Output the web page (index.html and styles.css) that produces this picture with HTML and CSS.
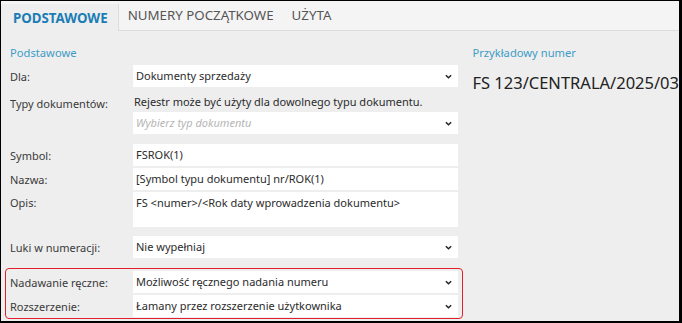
FILE: index.html
```html
<!DOCTYPE html>
<html lang="pl">
<head>
  <meta charset="UTF-8" />
  <meta name="viewport" content="width=device-width,initial-scale=1" />
  <title>Rejestr numeracji</title>
  <link rel="stylesheet" href="styles.css">
</head>
<body>
  <div class="frame">
    <div class="tabs">
      <div class="tab active">PODSTAWOWE</div>
      <div class="tab">NUMERY POCZĄTKOWE</div>
      <div class="tab">UŻYTA</div>
    </div>

    <div class="content">
      <div class="left">
        <div class="section-title">Podstawowe</div>

        <div class="row">
          <div class="label">Dla:</div>
          <div class="field select">Dokumenty sprzedaży
            <svg class="chev" viewBox="0 0 8 5"><path d="M1 1l3 3 3-3"/></svg>
          </div>
        </div>

        <div class="row row-top types">
          <div class="label">Typy dokumentów:</div>
          <div class="stack">
            <div class="note">Rejestr może być użyty dla dowolnego typu dokumentu.</div>
            <div class="field select placeholder">Wybierz typ dokumentu
              <svg class="chev" viewBox="0 0 8 5"><path d="M1 1l3 3 3-3"/></svg>
            </div>
          </div>
        </div>

        <div class="group">
          <div class="row">
            <div class="label">Symbol:</div>
            <div class="field">FSROK(1)</div>
          </div>
          <div class="row">
            <div class="label">Nazwa:</div>
            <div class="field">[Symbol typu dokumentu] nr/ROK(1)</div>
          </div>
          <div class="row row-top">
            <div class="label">Opis:</div>
            <div class="field tall">FS &lt;numer&gt;/&lt;Rok daty wprowadzenia dokumentu&gt;</div>
          </div>
        </div>

        <div class="row luki">
          <div class="label">Luki w numeracji:</div>
          <div class="field select">Nie wypełniaj
            <svg class="chev" viewBox="0 0 8 5"><path d="M1 1l3 3 3-3"/></svg>
          </div>
        </div>

        <div class="highlight">
          <div class="row">
            <div class="label">Nadawanie ręczne:</div>
            <div class="field select">Możliwość ręcznego nadania numeru
              <svg class="chev" viewBox="0 0 8 5"><path d="M1 1l3 3 3-3"/></svg>
            </div>
          </div>
          <div class="row">
            <div class="label">Rozszerzenie:</div>
            <div class="field select">Łamany przez rozszerzenie użytkownika
              <svg class="chev" viewBox="0 0 8 5"><path d="M1 1l3 3 3-3"/></svg>
            </div>
          </div>
        </div>
      </div>

      <div class="right">
        <div class="section-title">Przykładowy numer</div>
        <div class="sample">FS 123/CENTRALA/2025/03</div>
      </div>
    </div>
  </div>
</body>
</html>
```

FILE: styles.css
```css
:root {
  --bg: #eeeeee;
  --bar: #f4f4f4;
  --line: #dcdcdc;
  --fg: #2b2b2b;
  --label: #3a3a3a;
  --blue: #1b7db5;
  --light-blue: #3d9cc6;
}
* { box-sizing: border-box; margin:0; padding:0 }
html, body { height:100%; background:#000 }
body {
  font-family:"Noto Sans", "Open Sans", sans-serif;
  font-size:11px; color:var(--fg);
}

.frame {
  height:100%;
  border-style:solid; border-color:#000;
  border-width:1px 3px 2px 1px;
  background:var(--bg);
  overflow:hidden;
}

.tabs {
  display:flex; height:30px;
  background:var(--bar);
  border-bottom:1px solid var(--line);
}
.tab {
  display:flex; align-items:center;
  padding:0 0 1px; font-size:13.3px; color:#555;
}
.tab:nth-child(2) { margin-left:9px }
.tab:nth-child(3) { margin-left:18px }
.tab.active {
  padding:0 10px 0 12px;
  margin-top:3px; margin-bottom:-1px;
  background:var(--bg); color:var(--blue); font-weight:700;
  border-right:1px solid var(--line);
}

.content { display:flex }
.left { width:465px; padding:14px 0 0 9px }
.right { padding:14px 0 0 8px }

.section-title {
  color:var(--light-blue); font-size:11.2px;
  height:20px; line-height:16px;
}

.row {
  display:grid; grid-template-columns:123px 325px;
  align-items:center;
}
.row-top { align-items:start }
.row-top .label { padding-top:3px }
.label { color:var(--label); white-space:nowrap }

.field {
  position:relative;
  height:22px; line-height:22px;
  padding:0 3px; background:#fff;
  white-space:nowrap; overflow:hidden;
}
.field.tall { height:35px; line-height:20px; padding-top:1px }
.placeholder { color:#b5b5b5; font-style:italic }
.chev {
  position:absolute; right:6px; top:9px;
  width:7px; height:5px;
  fill:none; stroke:#222; stroke-width:1.7;
}

.types { margin-top:6px }
.stack { display:flex; flex-direction:column; gap:1px }
.note { line-height:18px; padding-left:1px }

.group { display:flex; flex-direction:column; gap:2px; margin-top:10px }
.luki { margin-top:9px }

.highlight {
  margin:10px 0 0 -5px; width:458px;
  padding:2px 0 1px 4px;
  border:1px solid #e0202a; border-radius:4px;
  display:flex; flex-direction:column; gap:2px;
}

.sample { font-size:16.5px; margin-top:6px; color:#222; white-space:nowrap }
```
